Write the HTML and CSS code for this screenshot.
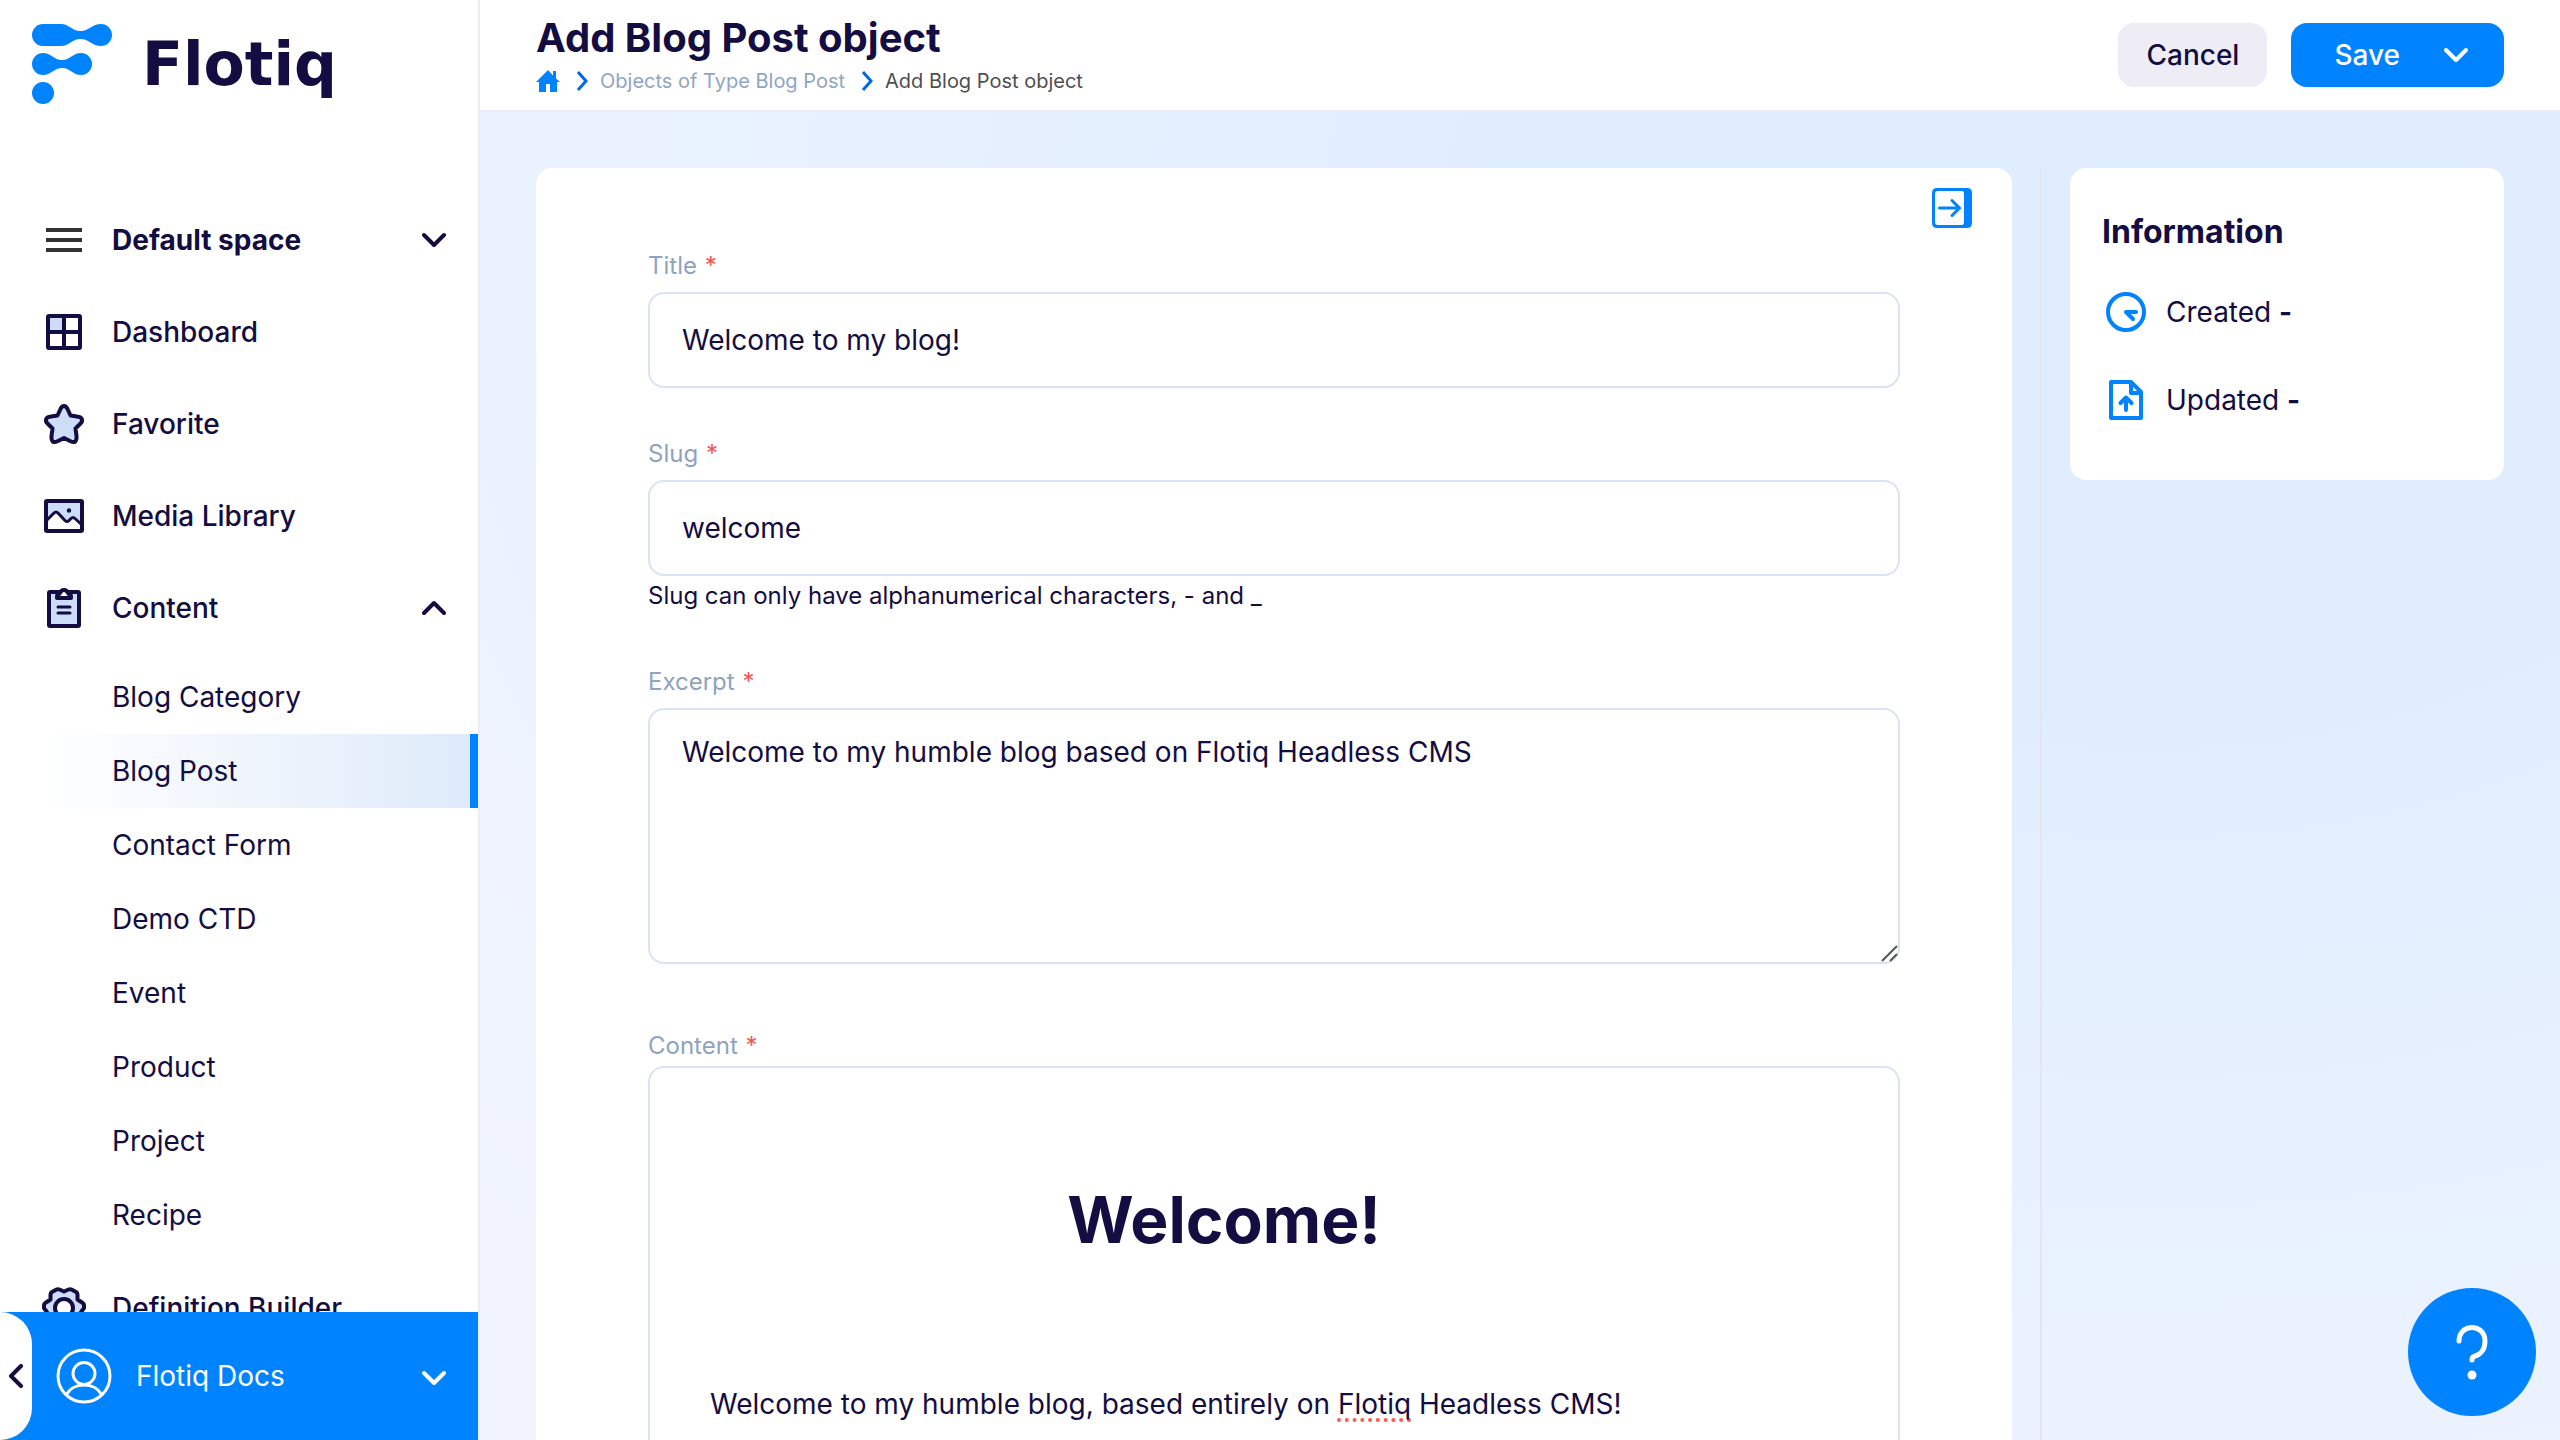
FILE: index.html
```html
<!DOCTYPE html>
<html lang="en">
<head>
<meta charset="utf-8">
<title>Add Blog Post object - Flotiq</title>
<meta name="viewport" content="width=device-width, initial-scale=1">
<link rel="stylesheet" href="styles.css">
</head>
<body>
<div class="app">
  <aside class="sidebar">
    <a class="logo" href="#" aria-label="Flotiq">
      <svg class="logo-mark" viewBox="0 0 80 80" aria-hidden="true">
        <path d="M11 0H29C37 0 40 7 48.500 7S60 0 69 0A10.900 10.900 0 0 1 69 22C60 22 57 15 48.500 15S37 22 29 22H11A10.900 10.900 0 0 1 11 0Z"/>
        <path d="M11 29C19 29 22 36 30 36S41 29 49 29A10.900 10.900 0 0 1 49 51C41 51 38 44 30 44S19 51 11 51A10.900 10.900 0 0 1 11 29Z"/>
        <circle cx="11" cy="69" r="11"/>
      </svg>
      <span class="logo-name">Flotiq</span>
    </a>
    <nav class="nav">
      <button class="nav-item nav-space" type="button">
        <svg class="icon" viewBox="0 0 48 48"><path d="M6 14H42M6 24H42M6 34H42" stroke="#333" stroke-width="4"/></svg>
        <span class="nav-text">Default space</span>
        <svg class="chevron" viewBox="0 0 24 24"><path d="M2 7L12 17L22 7"/></svg>
      </button>
      <a class="nav-item" href="#">
        <svg class="icon" viewBox="0 0 48 48"><path d="M8 8H24V24H8Z" fill="#cdddf7"/><rect class="line" x="8" y="8" width="32" height="32" rx="1"/><path class="line" d="M24 8V40M8 24H40"/></svg>
        <span class="nav-text">Dashboard</span>
      </a>
      <a class="nav-item" href="#">
        <svg class="icon" viewBox="0 0 48 48"><path class="line tint" d="M24 6C26 6 27 7.500 28 10L30.500 15.500L37 16.500C43 17 43 21 40.500 23.500L35.500 28.500L36.500 36C37 41.500 34.500 43 31 41.500L24 38L17 41.500C13.500 43 11 41.500 11.500 36L12.500 28.500L7.500 23.500C5 21 5 17 11 16.500L17.500 15.500L20 10C21 7.500 22 6 24 6Z"/></svg>
        <span class="nav-text">Favorite</span>
      </a>
      <a class="nav-item" href="#">
        <svg class="icon" viewBox="0 0 48 48"><path d="M6 9H42V34L33 26L27 30L17 21L6 29Z" fill="#cdddf7"/><rect class="line" x="6" y="9" width="36" height="30" rx="1"/><path class="line thin" d="M6 29L14 21Q16 19 18 21L25 28.500Q27 30.500 29 28.500L31 26.500Q33 24.500 35 26.500L42 33"/><circle cx="29" cy="18.500" r="2.200" fill="#140d42"/></svg>
        <span class="nav-text">Media Library</span>
      </a>
      <button class="nav-item" type="button" aria-expanded="true">
        <svg class="icon" viewBox="0 0 48 48"><rect class="line tint" x="9" y="8" width="30" height="34" rx="1"/><path class="line white" d="M17 14V12.500Q17 10 19.500 10C21 4.500 27 4.500 28.500 10Q31 10 31 12.500V14Z"/><path class="line thin" d="M18 23H30M18 29H30"/></svg>
        <span class="nav-text">Content</span>
        <svg class="chevron" viewBox="0 0 24 24"><path d="M2 17L12 7L22 17"/></svg>
      </button>
      <div class="subnav">
        <a class="sub-item" href="#">Blog Category</a>
        <a class="sub-item active" href="#" aria-current="page">Blog Post</a>
        <a class="sub-item" href="#">Contact Form</a>
        <a class="sub-item" href="#">Demo CTD</a>
        <a class="sub-item" href="#">Event</a>
        <a class="sub-item" href="#">Product</a>
        <a class="sub-item" href="#">Project</a>
        <a class="sub-item" href="#">Recipe</a>
      </div>
      <a class="nav-item" href="#">
        <svg class="icon" viewBox="0 0 48 48"><path class="line tint" d="M24 7.500L28.500 5.500Q30 4.800 31.500 5.500L36 8Q37.500 9 37.500 10.500V15.500L42 18.500Q44 19.500 44 21.500V24L40.500 29L41 34Q41 36 39.500 37L35 38L32 42H16L13 38L8.500 37Q7 36 7 34L7.500 29L4 24V21.500Q4 19.500 6 18.500L10.500 15.500V10.500Q10.500 9 12 8L16.500 5.500Q18 4.800 19.500 5.500Z"/><circle class="line white" cx="24" cy="24" r="9"/></svg>
        <span class="nav-text">Definition Builder</span>
      </a>
    </nav>
    <div class="account">
      <button class="collapse" type="button" aria-label="Collapse menu">
        <svg class="chevron" viewBox="0 0 24 24"><path d="M17 2L7 12L17 22"/></svg>
      </button>
      <button class="account-menu" type="button">
        <svg class="avatar" viewBox="0 0 56 56"><circle cx="28" cy="28" r="26"/><circle cx="28" cy="25.500" r="11"/><path d="M11 46C17 34 39 34 45 46"/></svg>
        <span class="nav-text">Flotiq Docs</span>
        <svg class="chevron" viewBox="0 0 24 24"><path d="M2 9L12 19L22 9"/></svg>
      </button>
    </div>
  </aside>

  <div class="page">
    <header class="topbar">
      <div class="heading">
        <h1 class="title">Add Blog Post object</h1>
        <nav class="crumbs" aria-label="Breadcrumb">
          <a class="crumb-home" href="#" aria-label="Home"><svg class="home" viewBox="0 0 24 24"><path d="M12 1L17 6.500V2H20V9.500L24 13H21V23H14V15H10V23H3V13H0Z"/></svg></a>
          <svg class="sep" viewBox="0 0 12 20"><path d="M2 1L10 10L2 19"/></svg>
          <a class="crumb" href="#">Objects of Type Blog Post</a>
          <svg class="sep" viewBox="0 0 12 20"><path d="M2 1L10 10L2 19"/></svg>
          <span class="crumb current">Add Blog Post object</span>
        </nav>
      </div>
      <div class="actions">
        <button class="btn btn-cancel" type="button">Cancel</button>
        <button class="btn btn-save" type="button"><span>Save</span><svg class="chevron" viewBox="0 0 24 24"><path d="M2 7L12 17L22 7"/></svg></button>
      </div>
    </header>

    <main class="workspace">
      <form class="card form">
        <button class="panel-toggle" type="button" aria-label="Toggle side panel">
          <svg viewBox="0 0 40 40"><path fill="#0083ff" fill-rule="evenodd" d="M5 0H35Q40 0 40 5V35Q40 40 35 40H5Q0 40 0 35V5Q0 0 5 0ZM6 3Q3 3 3 6V34Q3 37 6 37H30Q32 37 32 34V6Q32 3 30 3Z"/><path class="arrow" d="M7.500 20H27.500M20 12.500L27.500 20L20 27.500"/></svg>
        </button>
        <div class="field">
          <label class="label" for="title">Title <span class="required">*</span></label>
          <input class="control" id="title" type="text" value="Welcome to my blog!">
        </div>
        <div class="field">
          <label class="label" for="slug">Slug <span class="required">*</span></label>
          <input class="control" id="slug" type="text" value="welcome" aria-describedby="slug-help">
          <p class="help-text" id="slug-help">Slug can only have alphanumerical characters, - and _</p>
        </div>
        <div class="field field-long">
          <label class="label" for="excerpt">Excerpt <span class="required">*</span></label>
          <div class="area-wrap">
            <textarea class="control area" id="excerpt" spellcheck="false">Welcome to my humble blog based on Flotiq Headless CMS</textarea>
            <svg class="grip" viewBox="0 0 18 18" aria-hidden="true"><path d="M2 17L17 2M10 17L17 10"/></svg>
          </div>
        </div>
        <div class="field field-editor">
          <span class="label" id="content-label">Content <span class="required">*</span></span>
          <div class="control editor" contenteditable="true" spellcheck="false" role="textbox" aria-multiline="true" aria-labelledby="content-label">
            <h2 class="editor-title">Welcome!</h2>
            <p class="editor-text">Welcome to my humble blog, based entirely on <span class="misspelled">Flotiq</span> Headless CMS!</p>
          </div>
        </div>
      </form>
      <div class="divider"></div>
      <aside class="card info">
        <h2 class="info-title">Information</h2>
        <p class="info-row">
          <svg class="icon" viewBox="0 0 48 48"><circle class="blue" cx="24" cy="24" r="18"/><path class="blue" d="M34 24H24L31 31"/></svg>
          <span>Created <b>-</b></span>
        </p>
        <p class="info-row">
          <svg class="icon" viewBox="0 0 48 48"><path class="blue" d="M9 6H29L39 16V42H9ZM29 6V17H39M24 34V23M18.500 27L24 21.500L29.500 27"/></svg>
          <span>Updated <b>-</b></span>
        </p>
      </aside>
    </main>
  </div>

  <button class="help" type="button" aria-label="Help">
    <svg viewBox="0 0 128 128"><path d="M51 53C51 35 77 35 77 53C77 62 72 67 66 68.500Q64 69 64 72"/><circle cx="64" cy="87" r="4.500"/></svg>
  </button>
</div>
</body>
</html>
```
FILE: styles.css
```css
* {
  box-sizing: border-box;
}

body {
  margin: 0;
  font-family: Inter, "Liberation Sans", sans-serif;
  font-size: 28px;
  line-height: 36px;
  color: #140d42;
}

h1, h2, p {
  margin: 0;
}

a {
  color: inherit;
  text-decoration: none;
}

button {
  margin: 0;
  padding: 0;
  border: 0;
  background: none;
  color: inherit;
  font: inherit;
  text-align: left;
}

svg {
  display: block;
  flex: none;
  fill: none;
}

.app {
  display: flex;
  height: 100vh;
  overflow: hidden;
}

/* Sidebar */

.sidebar {
  flex: none;
  display: flex;
  flex-direction: column;
  width: 480px;
  border-right: 2px solid #ededf5;
  background: #fff;
}

.logo {
  flex: none;
  display: flex;
  align-items: center;
  gap: 30px;
  height: 194px;
  padding: 24px 32px 90px;
}

.logo-mark {
  width: 80px;
  height: 80px;
  fill: #0083ff;
}

.logo-name {
  font: bold 60px/80px "DejaVu Sans", sans-serif;
}

.nav {
  flex: 1;
  min-height: 0;
  overflow: hidden;
}

.nav-item {
  display: flex;
  align-items: center;
  gap: 24px;
  width: 100%;
  height: 92px;
  padding: 0 32px 0 40px;
  font-weight: 500;
}

.nav-space {
  font-weight: 700;
}

.nav-text {
  flex: 1;
}

.icon {
  width: 48px;
  height: 48px;
}

.line {
  stroke: #140d42;
  stroke-width: 4;
  stroke-linecap: round;
  stroke-linejoin: round;
}

.thin {
  stroke-width: 3;
}

.tint {
  fill: #cdddf7;
}

.white {
  fill: #fff;
}

.chevron {
  width: 24px;
  height: 24px;
  stroke: currentColor;
  stroke-width: 4;
  stroke-linecap: round;
  stroke-linejoin: round;
}

.subnav {
  padding: 6px 0 10px;
}

.sub-item {
  display: flex;
  align-items: center;
  height: 74px;
  padding-left: 112px;
}

.sub-item.active {
  border-right: 8px solid #0083ff;
  background: linear-gradient(90deg, #fff 8%, #deeafa);
}

.account {
  flex: none;
  display: flex;
  height: 128px;
  background: #0083ff;
}

.collapse {
  display: flex;
  align-items: center;
  justify-content: center;
  width: 32px;
  border-radius: 0 32px 32px 0;
  background: #fff;
}

.account-menu {
  flex: 1;
  display: flex;
  align-items: center;
  gap: 24px;
  padding: 0 32px 0 24px;
  color: #fff;
}

.avatar {
  width: 56px;
  height: 56px;
  stroke: #fff;
  stroke-width: 3;
}

/* Top bar */

.page {
  flex: 1;
  min-width: 0;
  display: flex;
  flex-direction: column;
}

.topbar {
  flex: none;
  display: flex;
  align-items: center;
  justify-content: space-between;
  height: 112px;
  padding: 0 56px;
  border-bottom: 2px solid #ededf5;
  background: #fff;
}

.title {
  font-size: 40px;
  line-height: 48px;
  font-weight: 700;
}

.crumbs {
  display: flex;
  align-items: center;
  gap: 12px;
  padding-top: 3px;
  font-size: 20px;
  line-height: 32px;
}

.crumb {
  color: #8fa6c3;
}

.crumb.current {
  color: #4f4f4f;
}

.home {
  width: 24px;
  height: 24px;
  fill: #0083ff;
}

.sep {
  width: 12px;
  height: 20px;
  margin-left: 4px;
  stroke: #0068e8;
  stroke-width: 3;
}

.actions {
  display: flex;
  gap: 24px;
}

.btn {
  height: 64px;
  border-radius: 16px;
  font-weight: 500;
}

.btn-cancel {
  padding: 0 28px;
  background: #eeedf5;
}

.btn-save {
  display: flex;
  align-items: center;
  gap: 44px;
  padding: 0 36px 0 43px;
  background: #0083ff;
  color: #fff;
}

/* Workspace */

.workspace {
  flex: 1;
  min-height: 0;
  display: flex;
  padding: 56px 56px 0;
  overflow: hidden;
  background: radial-gradient(ellipse at 80% 10%, #e0edfe 25%, #e8f1fe 60%, #f1f4ff 90%);
}

.card {
  border-radius: 16px;
  background: #fff;
}

.form {
  position: relative;
  flex: 1;
  min-width: 0;
  padding: 82px 112px;
  height: max-content;
}

.panel-toggle {
  position: absolute;
  top: 20px;
  right: 40px;
  width: 40px;
  height: 40px;
}

.arrow {
  stroke: #0083ff;
  stroke-width: 3;
  stroke-linecap: round;
}

.field {
  margin-bottom: 50px;
}

.label {
  display: block;
  margin-bottom: 10px;
  color: #8fa3bf;
  font-size: 24px;
  line-height: 32px;
}

.required {
  margin-left: 1px;
  color: #f25555;
}

.control {
  display: block;
  width: 100%;
  height: 96px;
  padding: 0 32px;
  border: 2px solid #d9e3f3;
  border-radius: 16px;
  background: #fff;
  color: inherit;
  font: inherit;
  outline: 0;
}

.help-text {
  padding: 4px 0;
  font-size: 24px;
  line-height: 32px;
}

.field-long {
  margin-bottom: 66px;
}

.area-wrap {
  position: relative;
}

.area {
  height: 256px;
  padding: 24px 32px;
  resize: none;
}

.grip {
  position: absolute;
  right: 2px;
  bottom: 2px;
  width: 18px;
  height: 18px;
  stroke: #555;
  stroke-width: 2;
}

.field-editor .label {
  margin-bottom: 4px;
}

.editor {
  height: auto;
  min-height: 480px;
  padding: 112px 160px 60px 60px;
}

.editor-title {
  font-size: 64px;
  line-height: 80px;
  font-weight: 700;
  text-align: center;
}

.editor-text {
  margin-top: 126px;
}

.misspelled {
  text-decoration: underline dotted #ff5a50 4px;
  text-decoration-skip-ink: none;
  text-underline-offset: 4px;
}

.divider {
  width: 2px;
  margin: 0 28px;
  background: #e2e6ee;
}

.info {
  width: 434px;
  height: 312px;
  padding: 44px 32px;
}

.info-title {
  margin-bottom: 36px;
  font-size: 32px;
  line-height: 40px;
  font-weight: 700;
}

.info-row {
  display: flex;
  align-items: center;
  gap: 16px;
  height: 48px;
  margin-bottom: 40px;
}

.blue {
  stroke: #0083ff;
  stroke-width: 4;
  stroke-linecap: round;
  stroke-linejoin: round;
}

.help {
  position: fixed;
  right: 24px;
  bottom: 24px;
  width: 128px;
  height: 128px;
  border-radius: 50%;
  background: #0083ff;
}

.help path {
  stroke: #fff;
  stroke-width: 5;
  stroke-linecap: round;
}

.help circle {
  fill: #fff;
}
```
